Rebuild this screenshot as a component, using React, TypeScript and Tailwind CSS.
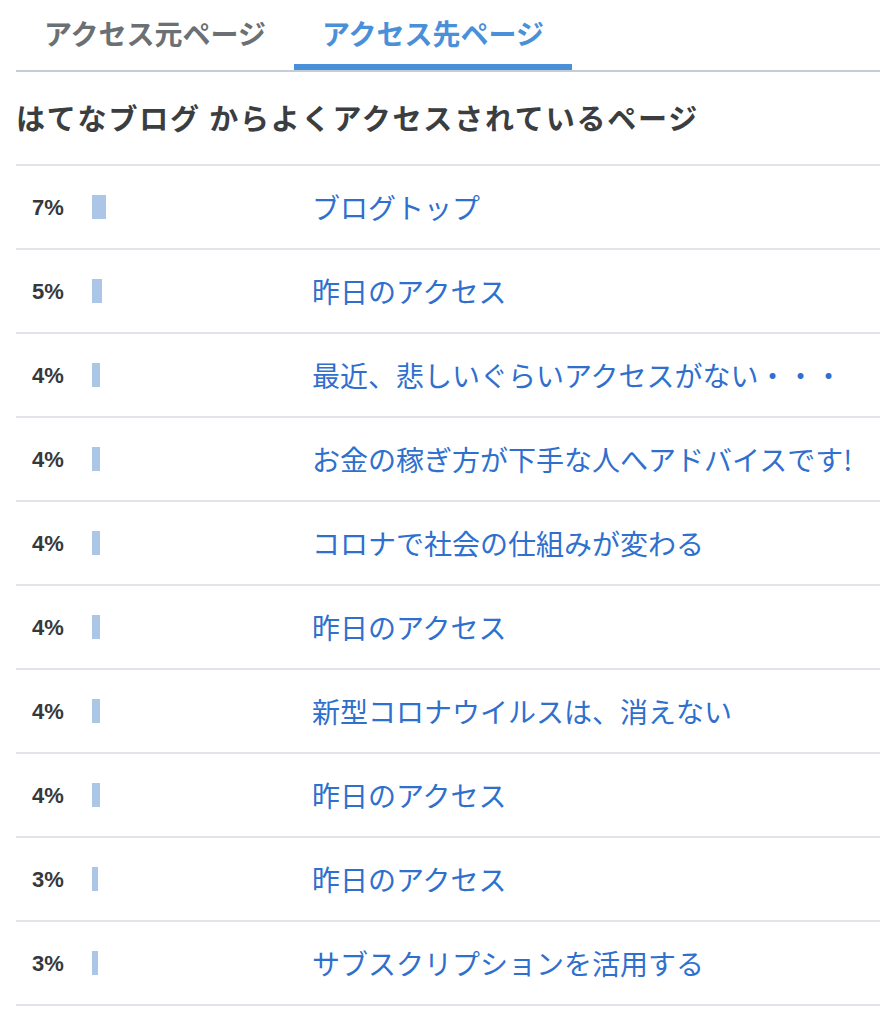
import { useState } from 'react'

type Fila = { pct: number; titulo: string }

const FILAS: Fila[] = [
  { pct: 7, titulo: 'ブログトップ' },
  { pct: 5, titulo: '昨日のアクセス' },
  { pct: 4, titulo: '最近、悲しいぐらいアクセスがない・・・' },
  { pct: 4, titulo: 'お金の稼ぎ方が下手な人へアドバイスです!' },
  { pct: 4, titulo: 'コロナで社会の仕組みが変わる' },
  { pct: 4, titulo: '昨日のアクセス' },
  { pct: 4, titulo: '新型コロナウイルスは、消えない' },
  { pct: 4, titulo: '昨日のアクセス' },
  { pct: 3, titulo: '昨日のアクセス' },
  { pct: 3, titulo: 'サブスクリプションを活用する' },
]

const TABS = ['アクセス元ページ', 'アクセス先ページ']

export default function App() {
  const [tab, setTab] = useState(1)

  return (
    <div
      className="w-[880px] overflow-hidden bg-white pl-4"
      style={{ fontFamily: '"Noto Sans CJK JP", "Noto Sans", sans-serif' }}
    >
      {/* Pestañas */}
      <div className="flex border-b-2 border-[#c3cdd5]">
        {TABS.map((t, i) => (
          <button
            key={t}
            onClick={() => setTab(i)}
            className={
              i === tab
                ? 'w-[278px] h-[70px] pt-[2px] border-b-[6px] border-[#4a90d9] text-[28px] font-bold text-[#4a90d9] whitespace-nowrap'
                : 'w-[278px] h-[70px] pt-[2px] border-b-[6px] border-transparent text-[28px] font-bold text-[#6b7074] whitespace-nowrap'
            }
          >
            {t}
          </button>
        ))}
      </div>

      {/* Cabecera */}
      <h2 className="h-[92px] flex items-center text-[29px] tracking-[1.8px] font-bold text-[#3b3e41] whitespace-nowrap">
        はてなブログ からよくアクセスされているページ
      </h2>

      {/* Lista */}
      <ul className="border-b-2 border-[#e1e5e9]">
        {FILAS.map((f, i) => (
          <li key={i} className="h-[84px] flex items-center border-t-2 border-[#e1e5e9]">
            <span
              className="w-[76px] pl-4 text-[22px] font-bold text-[#36393c]"
              style={{ fontFamily: '"Liberation Sans", Arial, sans-serif' }}
            >
              {f.pct}%
            </span>
            <span className="w-[220px] flex items-center">
              <span className="h-[24px] bg-[#abc6e6]" style={{ width: f.pct * 2 }} />
            </span>
            <a href="#" className="text-[28px] text-[#2f6fce] whitespace-nowrap">
              {f.titulo}
            </a>
          </li>
        ))}
      </ul>
    </div>
  )
}
